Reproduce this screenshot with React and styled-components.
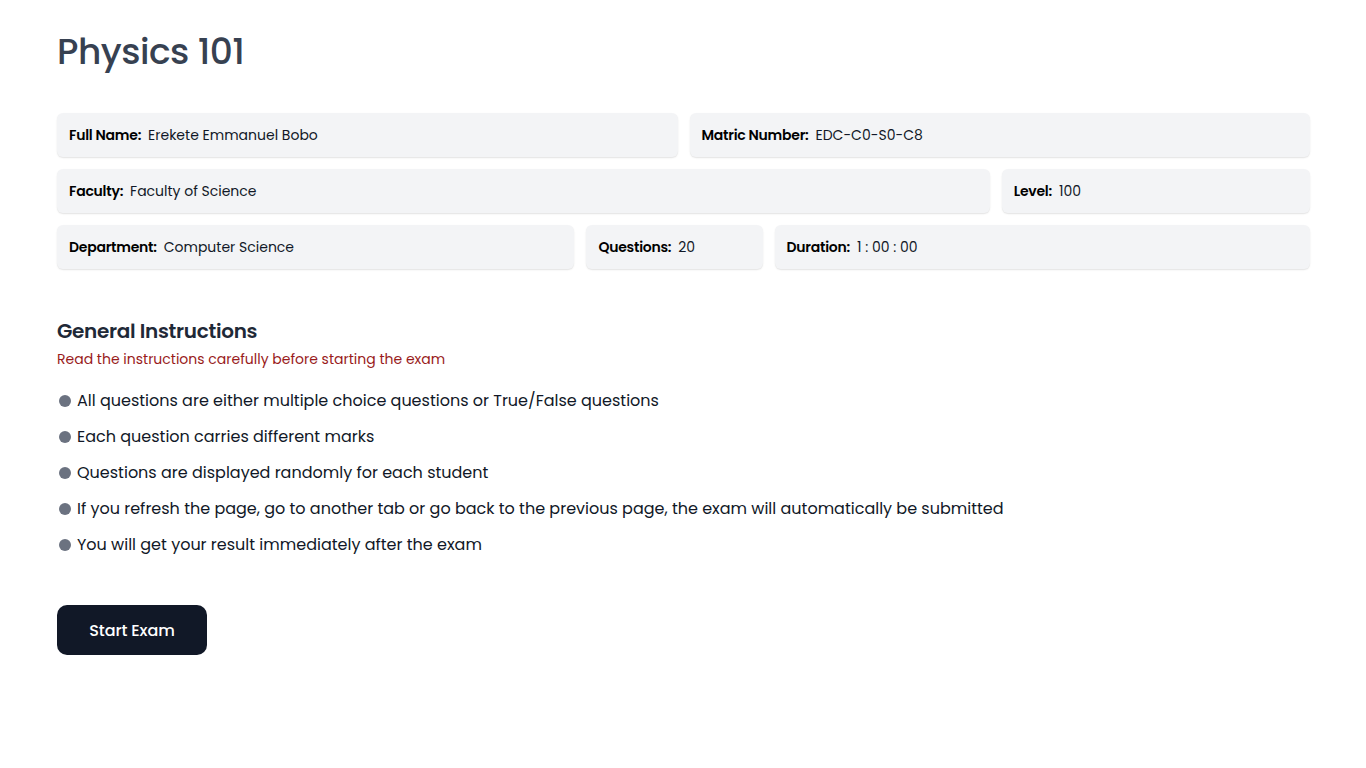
import React from 'react';
import styled, { createGlobalStyle } from 'styled-components';

const GlobalStyle = createGlobalStyle`
  body {
    margin: 0;
    background: #fff;
    font-family: Poppins, Inter, "Noto Sans", sans-serif;
  }
  * {
    box-sizing: border-box;
  }
`;

const Page = styled.div`
  padding: 32px 56px 40px 57px;
`;

const Title = styled.h1`
  margin: 0 0 41px;
  font-size: 36px;
  line-height: 40px;
  font-weight: 500;
  color: #374151;
  letter-spacing: -0.5px;
`;

const Details = styled.div`
  display: flex;
  flex-direction: column;
  gap: 12px;
`;

const Row = styled.div`
  display: grid;
  grid-template-columns: ${(p) => p.cols};
  gap: 12px;
`;

const Card = styled.div`
  height: 44px;
  display: flex;
  align-items: center;
  padding: 0 12px;
  background: #f3f4f6;
  border-radius: 6px;
  box-shadow: 0 1px 2px rgba(0, 0, 0, 0.08), 0 1px 1px rgba(0, 0, 0, 0.04);
  font-size: 14px;
  color: #111827;
  strong {
    font-weight: 600;
    letter-spacing: -0.25px;
    margin-right: 7px;
    color: #000;
  }
`;

const Section = styled.section`
  margin-top: 48px;
`;

const Heading = styled.h2`
  margin: 0;
  font-size: 20px;
  line-height: 28px;
  font-weight: 600;
  letter-spacing: -0.3px;
  color: #1f2937;
`;

const Note = styled.p`
  margin: 4px 0 20px;
  font-size: 14px;
  line-height: 20px;
  color: #991b1b;
`;

const List = styled.ul`
  list-style: none;
  margin: 0;
  padding: 0;
  display: flex;
  flex-direction: column;
  gap: 12px;
`;

const Item = styled.li`
  display: flex;
  align-items: center;
  gap: 6px;
  font-size: 16px;
  line-height: 24px;
  color: #111827;
  &::before {
    content: '';
    width: 12px;
    height: 12px;
    margin-left: 2px;
    border-radius: 50%;
    background: #6b7280;
    flex-shrink: 0;
  }
`;

const StartButton = styled.button`
  margin-top: 48px;
  width: 150px;
  height: 50px;
  border: none;
  border-radius: 10px;
  background: #111827;
  color: #fff;
  font-family: inherit;
  font-size: 16px;
  font-weight: 500;
  letter-spacing: -0.1px;
  cursor: pointer;
`;

const Field = ({ label, value }) => (
  <Card>
    <strong>{label}:</strong>
    {value}
  </Card>
);

const instructions = [
  'All questions are either multiple choice questions or True/False questions',
  'Each question carries different marks',
  'Questions are displayed randomly for each student',
  'If you refresh the page, go to another tab or go back to the previous page, the exam will automatically be submitted',
  'You will get your result immediately after the exam',
];

export default function App() {
  return (
    <Page>
      <GlobalStyle />
      <Title>Physics 101</Title>
      <Details>
        <Row cols="1fr 1fr">
          <Field label="Full Name" value="Erekete Emmanuel Bobo" />
          <Field label="Matric Number" value="EDC-C0-S0-C8" />
        </Row>
        <Row cols="932fr 308fr">
          <Field label="Faculty" value="Faculty of Science" />
          <Field label="Level" value="100" />
        </Row>
        <Row cols="517fr 176fr 535fr">
          <Field label="Department" value="Computer Science" />
          <Field label="Questions" value="20" />
          <Field label="Duration" value="1 : 00 : 00" />
        </Row>
      </Details>
      <Section>
        <Heading>General Instructions</Heading>
        <Note>Read the instructions carefully before starting the exam</Note>
        <List>
          {instructions.map((text) => (
            <Item key={text}>{text}</Item>
          ))}
        </List>
        <StartButton>Start Exam</StartButton>
      </Section>
    </Page>
  );
}
